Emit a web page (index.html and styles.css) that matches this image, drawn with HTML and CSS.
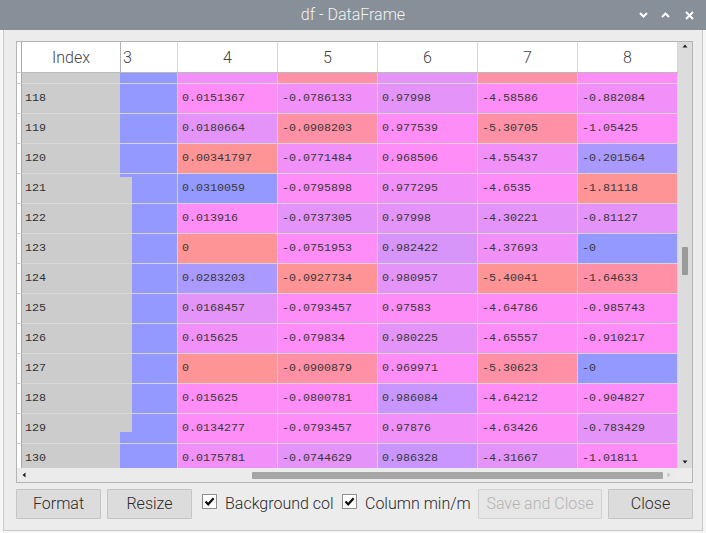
FILE: index.html
```html
<!DOCTYPE html>
<html>
<head>
<meta charset="utf-8">
<title>df - DataFrame</title>
<link rel="stylesheet" href="styles.css">
</head>
<body>
<div class="window">
  <div class="titlebar">
    <div></div>
    <div class="title">df - DataFrame</div>
    <div class="controls">
      <svg class="ctl-down" width="9" height="6" viewBox="0 0 9 6"><path d="M1 1 L4.5 4.5 L8 1" stroke="#fff" stroke-width="2" fill="none"/></svg>
      <svg class="ctl-up" width="9" height="6" viewBox="0 0 9 6"><path d="M1 5 L4.5 1.5 L8 5" stroke="#fff" stroke-width="2" fill="none"/></svg>
      <svg class="ctl-x" width="9" height="9" viewBox="0 0 9 9"><path d="M1 1 L8 8 M8 1 L1 8" stroke="#fff" stroke-width="2" fill="none"/></svg>
    </div>
  </div>
  <div class="body">
    <div class="frame">
      <div class="main">
        <div class="strip">
          <div class="strip-head"></div>
          <div class="strip-rows"></div>
        </div>
        <div class="grid">
          <div class="hdr">
            <div class="idx-h">Index</div>
            <div class="hclip">
              <div class="hshift">
                <div class="hc">3</div><div class="hc">4</div><div class="hc">5</div><div class="hc">6</div><div class="hc">7</div><div class="hc">8</div>
              </div>
            </div>
          </div>
          <div class="rows">
            <div class="rows-in">
              <div class="row"><div class="ic"></div><div class="clip"><div class="shift"><div class="c blue"></div><div class="c orchid"></div><div class="c rose"></div><div class="c lilac"></div><div class="c rose"></div><div class="c pink"></div></div></div></div>
              <div class="row"><div class="ic">118</div><div class="clip"><div class="shift"><div class="c blue"></div><div class="c pink">0.0151367</div><div class="c orchid">-0.0786133</div><div class="c lilac">0.97998</div><div class="c pink">-4.58586</div><div class="c orchid">-0.882084</div></div></div></div>
              <div class="row"><div class="ic">119</div><div class="clip"><div class="shift"><div class="c blue"></div><div class="c lilac">0.0180664</div><div class="c rose">-0.0908203</div><div class="c pink">0.977539</div><div class="c rose">-5.30705</div><div class="c pink">-1.05425</div></div></div></div>
              <div class="row"><div class="ic">120</div><div class="clip"><div class="shift"><div class="c blue"></div><div class="c salmon">0.00341797</div><div class="c orchid">-0.0771484</div><div class="c pink">0.968506</div><div class="c orchid">-4.55437</div><div class="c violet">-0.201564</div></div></div></div>
              <div class="row"><div class="ic">121</div><div class="clip"><div class="shift"><div class="c blue"></div><div class="c blue">0.0310059</div><div class="c pink">-0.0795898</div><div class="c orchid">0.977295</div><div class="c pink">-4.6535</div><div class="c salmon">-1.81118</div></div></div></div>
              <div class="row"><div class="ic">122</div><div class="clip"><div class="shift"><div class="c blue"></div><div class="c pink">0.013916</div><div class="c lilac">-0.0737305</div><div class="c lilac">0.97998</div><div class="c lilac">-4.30221</div><div class="c lilac">-0.81127</div></div></div></div>
              <div class="row"><div class="ic">123</div><div class="clip"><div class="shift"><div class="c blue"></div><div class="c salmon">0</div><div class="c pink">-0.0751953</div><div class="c mauve">0.982422</div><div class="c orchid">-4.37693</div><div class="c blue">-0</div></div></div></div>
              <div class="row"><div class="ic">124</div><div class="clip"><div class="shift"><div class="c blue"></div><div class="c violet">0.0283203</div><div class="c salmon">-0.0927734</div><div class="c lilac">0.980957</div><div class="c salmon">-5.40041</div><div class="c rose">-1.64633</div></div></div></div>
              <div class="row"><div class="ic">125</div><div class="clip"><div class="shift"><div class="c blue"></div><div class="c lilac">0.0168457</div><div class="c pink">-0.0793457</div><div class="c pink">0.97583</div><div class="c pink">-4.64786</div><div class="c pink">-0.985743</div></div></div></div>
              <div class="row"><div class="ic">126</div><div class="clip"><div class="shift"><div class="c blue"></div><div class="c orchid">0.015625</div><div class="c pink">-0.079834</div><div class="c lilac">0.980225</div><div class="c pink">-4.65557</div><div class="c pink">-0.910217</div></div></div></div>
              <div class="row"><div class="ic">127</div><div class="clip"><div class="shift"><div class="c blue"></div><div class="c salmon">0</div><div class="c rose">-0.0900879</div><div class="c pink">0.969971</div><div class="c rose">-5.30623</div><div class="c blue">-0</div></div></div></div>
              <div class="row"><div class="ic">128</div><div class="clip"><div class="shift"><div class="c blue"></div><div class="c pink">0.015625</div><div class="c pink">-0.0800781</div><div class="c purple">0.986084</div><div class="c pink">-4.64212</div><div class="c pink">-0.904827</div></div></div></div>
              <div class="row"><div class="ic">129</div><div class="clip"><div class="shift"><div class="c blue"></div><div class="c pink">0.0134277</div><div class="c pink">-0.0793457</div><div class="c orchid">0.97876</div><div class="c pink">-4.63426</div><div class="c lilac">-0.783429</div></div></div></div>
              <div class="row"><div class="ic">130</div><div class="clip"><div class="shift"><div class="c blue"></div><div class="c orchid">0.0175781</div><div class="c lilac">-0.0744629</div><div class="c purple">0.986328</div><div class="c lilac">-4.31667</div><div class="c pink">-1.01811</div></div></div></div>
            </div>
          </div>
          <div class="glitch"></div>
        </div>
        <div class="vscroll">
          <svg class="arrow" width="14" height="8" viewBox="0 0 14 8"><path d="M4.5 5.5 L7 2.5 L9.5 5.5 Z" fill="#222"/></svg>
          <div class="vthumb"></div>
          <svg class="arrow arrow-down" width="14" height="8" viewBox="0 0 14 8"><path d="M4.5 2.5 L7 5.5 L9.5 2.5 Z" fill="#222"/></svg>
        </div>
      </div>
      <div class="hbar">
        <div class="hscroll">
          <svg width="12" height="14" viewBox="0 0 12 14"><path d="M8.5 4.5 L5.5 7 L8.5 9.5 Z" fill="#222"/></svg>
          <div class="hthumb"></div>
          <svg class="arrow-right" width="12" height="14" viewBox="0 0 12 14"><path d="M4.5 4.5 L7.5 7 L4.5 9.5 Z" fill="#c4c4c4"/></svg>
        </div>
        <div class="corner"></div>
      </div>
    </div>
    <div class="buttons">
      <div class="btn">Format</div>
      <div class="btn">Resize</div>
      <div class="check check-bg">
        <div class="box"><svg width="13" height="13" viewBox="0 0 13 13"><path d="M2.5 6.5 L5.2 9.3 L10.6 3.2" stroke="#111" stroke-width="2.2" fill="none"/></svg></div>
        <div class="lbl">Background col</div>
      </div>
      <div class="check check-col">
        <div class="box"><svg width="13" height="13" viewBox="0 0 13 13"><path d="M2.5 6.5 L5.2 9.3 L10.6 3.2" stroke="#111" stroke-width="2.2" fill="none"/></svg></div>
        <div class="lbl">Column min/m</div>
      </div>
      <div class="btn btn-wide disabled">Save and Close</div>
      <div class="btn">Close</div>
    </div>
  </div>
</div>
</body>
</html>
```

FILE: styles.css
```css
* { box-sizing: border-box; }
html, body { margin: 0; padding: 0; }
body {
  width: 706px;
  height: 533px;
  overflow: hidden;
  background: #f6f6f6;
  font-family: Roboto, "Liberation Sans", sans-serif;
}
.window { width: 706px; }

/* title bar */
.titlebar {
  height: 30px;
  background: #878f99;
  display: grid;
  grid-template-columns: 1fr auto 1fr;
  align-items: center;
}
.title {
  color: #f3f3f3;
  font-size: 16px;
  font-weight: 300;
  line-height: 30px;
}
.controls {
  display: flex;
  justify-content: flex-end;
  align-items: center;
  padding-right: 12px;
}
.ctl-up { margin-left: 13px; }
.ctl-x { margin-left: 15px; }

/* window body */
.body {
  margin: 0 3px 0 3px;
  height: 501px;
  background: #ececec;
  border: 1px solid #c9c9c9;
  border-top: 0;
  padding: 11px 0 0 12px;
}
.frame {
  width: 677px;
  height: 442px;
  border: 1px solid #b4b4b4;
  background: #ececec;
}
.main {
  display: flex;
  height: 426px;
}
.strip {
  width: 4px;
  flex: none;
  display: flex;
  flex-direction: column;
  background: #fff;
}
.strip-head {
  height: 31px;
  border-bottom: 1px solid #c8c8c8;
}
.strip-rows {
  flex: 1;
  background: repeating-linear-gradient(to bottom, #fff 0 29px, #cfcfcf 29px 30px);
  background-position: 0 -19px;
}
.grid {
  width: 657px;
  flex: none;
  position: relative;
  display: flex;
  flex-direction: column;
}

/* header */
.hdr {
  display: flex;
  height: 31px;
  border-bottom: 1px solid #b9b9b9;
  background: #fff;
}
.idx-h {
  width: 99px;
  flex: none;
  border-left: 1px solid #a9a9a9;
  text-align: center;
  padding-top: 1px;
  line-height: 30px;
  font-size: 16px;
  font-weight: 300;
  color: #444;
}
.hclip {
  width: 558px;
  overflow: hidden;
  border-left: 1px solid #b4b4b4;
}
.hshift {
  display: flex;
  margin-left: -43px;
}
.hc {
  width: 100px;
  flex: none;
  height: 30px;
  border-right: 1px solid #d8d8d8;
  text-align: center;
  padding-top: 1px;
  line-height: 30px;
  font-size: 16px;
  font-weight: 300;
  color: #444;
}

/* body rows */
.rows {
  height: 395px;
  overflow: hidden;
}
.rows-in { margin-top: -19px; }
.row {
  display: flex;
  height: 30px;
}
.ic {
  width: 99px;
  flex: none;
  background: #cccccc;
  border-left: 1px solid #a9a9a9;
  border-bottom: 1px solid #d8d8d8;
  padding-left: 3px;
  font-family: "Liberation Mono", monospace;
  font-size: 11.7px;
  line-height: 29px;
  color: #333;
}
.clip {
  width: 558px;
  overflow: hidden;
}
.shift {
  display: flex;
  margin-left: -42px;
}
.c {
  width: 100px;
  flex: none;
  height: 30px;
  border-right: 1px solid #d4d4d4;
  border-bottom: 1px solid #d4d4d4;
  padding-left: 4px;
  font-family: "Liberation Mono", monospace;
  font-size: 11.7px;
  line-height: 29px;
  color: #383838;
  white-space: nowrap;
}
.blue { background: #9499ff; }
.violet { background: #aa9aff; }
.purple { background: #c996ff; }
.mauve { background: #d795f9; }
.lilac { background: #e494f8; }
.orchid { background: #f190f8; }
.pink { background: #fe8df8; }
.rose { background: #ff90a6; }
.salmon { background: #ff9496; }

/* redraw artefact of the index column, drawn over column 3 */
.glitch {
  position: absolute;
  left: 99px;
  top: 135px;
  width: 12px;
  height: 255px;
  background: repeating-linear-gradient(to bottom, #cccccc 0 26px, #d8d8d8 26px 27px, #cccccc 27px 30px);
}

/* scrollbars */
.vscroll {
  width: 14px;
  flex: none;
  background: #dcdcdc;
  display: flex;
  flex-direction: column;
  align-items: center;
  padding-bottom: 2px;
}
.arrow { flex: none; display: block; }
.arrow-down { margin-top: auto; }
.vthumb {
  margin-top: 197px;
  width: 6px;
  height: 28px;
  background: #9a9a9a;
  border-radius: 1px;
}
.hbar {
  display: flex;
  height: 14px;
}
.hscroll {
  flex: 1;
  background: #ebebeb;
  display: flex;
  align-items: center;
  padding-right: 3px;
}
.hscroll svg { flex: none; display: block; }
.hthumb {
  margin-left: 223px;
  width: 411px;
  height: 7px;
  background: #a6a6a6;
  border-radius: 1px;
}
.arrow-right { margin-left: auto; }
.corner {
  width: 14px;
  flex: none;
  background: #ececec;
}

/* buttons */
.buttons {
  display: flex;
  align-items: center;
  margin-top: 6px;
  height: 30px;
  gap: 6px;
}
.btn {
  width: 85px;
  height: 30px;
  flex: none;
  background: #dcdcdc;
  border: 1px solid #c5c5c5;
  border-radius: 1px;
  text-align: center;
  line-height: 28px;
  font-size: 16px;
  font-weight: 300;
  color: #2a2a2a;
}
.btn-wide { width: 124px; margin-left: 2px; }
.disabled {
  background: #e6e6e6;
  border-color: #d3d3d3;
  color: #b4b4b4;
}
.check {
  display: flex;
  align-items: center;
  gap: 8px;
  flex: none;
  height: 30px;
}
.check-bg { width: 132px; margin-left: 4px; }
.check-col { width: 128px; margin-left: 2px; }
.box {
  width: 15px;
  height: 15px;
  flex: none;
  background: #fff;
  border: 1px solid #8e8e8e;
  margin-bottom: 6px;
  display: flex;
  align-items: center;
  justify-content: center;
}
.box svg { display: block; }
.lbl {
  flex: 1;
  min-width: 0;
  white-space: nowrap;
  font-size: 16px;
  font-weight: 300;
  color: #2a2a2a;
  line-height: 20px;
}
```
